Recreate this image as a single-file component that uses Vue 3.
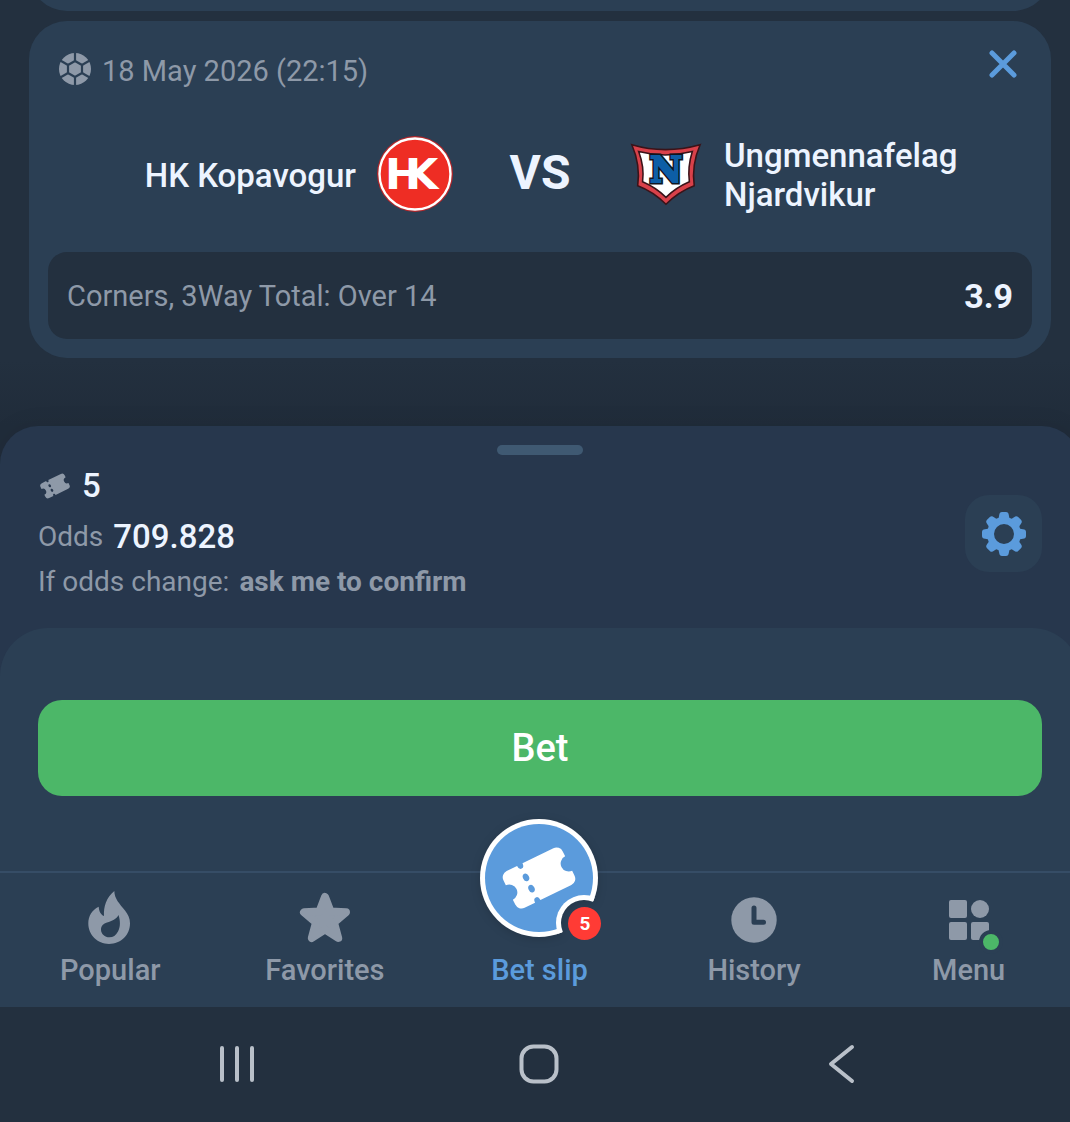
<template>
  <div class="viewport">
    <div class="screen">
      <svg class="sprite" aria-hidden="true">
        <symbol id="ticket" viewBox="0 0 76 64">
          <g transform="translate(38 32) rotate(-26)">
            <path
              fill="currentColor"
              fill-rule="evenodd"
              d="M-26-20.5H-14.4a3 4.5 0 0 0 6 0H26a7 7 0 0 1 7 7V-8a8 8 0 0 0 0 16v5.5a7 7 0 0 1-7 7H-8.4a3 4.5 0 0 0-6 0H-26a7 7 0 0 1-7-7V8a8 8 0 0 0 0-16v-5.5a7 7 0 0 1 7-7zM-14.4-6.3a3 4 0 1 0 6 0a3 4 0 1 0-6 0zM-14.4 6.3a3 4 0 1 0 6 0a3 4 0 1 0-6 0z"
            />
          </g>
        </symbol>
      </svg>

      <main class="events">
        <div class="event-card previous"></div>

        <article class="event-card">
          <header class="event-header">
            <svg class="ball" viewBox="-16 -16 32 32" aria-hidden="true">
              <circle r="16" fill="currentColor" />
              <g class="seams">
                <path d="M0-8L7-4V4L0 8L-7 4V-4Z" />
                <path
                  v-for="angle in seamAngles"
                  :key="angle"
                  :transform="`rotate(${angle})`"
                  d="M0-8V-17"
                />
              </g>
            </svg>
            <time class="event-date" datetime="2026-05-18T22:15">{{ event.date }}</time>
            <button class="remove-btn" type="button" aria-label="Remove" @click="removeEvent">
              <svg viewBox="0 0 28 28" aria-hidden="true">
                <path d="M3 3L25 25M25 3L3 25" />
              </svg>
            </button>
          </header>

          <div class="teams">
            <div class="team home">
              <span>{{ event.home }}</span>
              <svg class="crest" viewBox="0 0 78 78" aria-hidden="true">
                <circle cx="39" cy="39" r="38" fill="#b3262a" />
                <circle cx="39" cy="39" r="35.5" fill="#ee2d24" stroke="#fff" stroke-width="2.4" />
                <text class="hk" x="9 29" y="54">HK</text>
              </svg>
            </div>
            <strong class="versus">VS</strong>
            <div class="team away">
              <svg class="crest" viewBox="0 0 80 78" aria-hidden="true">
                <path
                  d="M6 9Q40 19 76 9Q67 30 70 51Q54 57 41 70Q28 57 12 51Q15 30 6 9Z"
                  fill="#d9414a"
                  stroke="#3a1319"
                  stroke-width="1.6"
                />
                <path
                  d="M13 16Q40 23 68 16Q63 32 65 47Q51 53 41 63Q31 53 17 47Q19 32 13 16Z"
                  fill="#fff"
                  stroke="#3a1319"
                  stroke-width="1.6"
                />
                <g class="njardvik">
                  <text class="outline" x="41" y="47" aria-hidden="true">N</text>
                  <text x="41" y="47">N</text>
                </g>
              </svg>
              <span>{{ event.away }}</span>
            </div>
          </div>

          <div class="selection">
            <span class="market">{{ event.market }}</span>
            <strong class="price">{{ event.price }}</strong>
          </div>
        </article>
      </main>

      <section class="sheet">
        <div class="handle"></div>
        <div class="summary">
          <div class="totals">
            <p class="count">
              <svg class="count-icon" aria-hidden="true"><use href="#ticket" /></svg>
              <strong>{{ count }}</strong>
            </p>
            <p class="odds">Odds <strong>{{ totalOdds }}</strong></p>
            <p class="policy">If odds change: <b>ask me to confirm</b></p>
          </div>
          <button class="settings-btn" type="button" aria-label="Settings">
            <svg viewBox="-22 -22 44 44" aria-hidden="true">
              <circle r="13.500" fill="none" stroke="currentColor" stroke-width="7" />
              <path
                v-for="angle in gearAngles"
                :key="angle"
                :transform="`rotate(${angle})`"
                fill="currentColor"
                d="M-6.500-14Q-5-16-4.800-19Q-4.500-22-2-22H2Q4.500-22 4.800-19Q5-16 6.500-14Z"
              />
            </svg>
          </button>
        </div>

        <div class="panel">
          <button class="bet-btn" type="button">Bet</button>
        </div>
      </section>

      <nav class="tabs">
        <a class="tab" href="#popular">
          <svg viewBox="0 0 60 60" aria-hidden="true">
            <path
              fill="currentColor"
              fill-rule="evenodd"
              d="M34.300 2C26 9 23.500 18 24 27C20.500 25.500 19 22 18.700 17.700C12 21 8.300 27 8.300 34.300C8.300 46 17.500 55 29 55C41 55 50 46 50 34.300C50 29 48 25.500 45 21.500C39.500 14.500 34.500 10 34.300 2ZM38.500 26C40.500 32 40.500 38 38 42.500C36 46.500 33 48.300 29.500 48.300C24.700 48.300 21 45 21 40.500C21 37 23.500 34.500 27 33.500C32 32 36.500 30 38.500 26Z"
            />
          </svg>
          <span>Popular</span>
        </a>
        <a class="tab" href="#favorites">
          <svg viewBox="0 0 60 60" aria-hidden="true">
            <path
              fill="currentColor"
              stroke="currentColor"
              stroke-width="8"
              stroke-linejoin="round"
              d="M30 8L35.500 22.500L51 23.300L39 33.500L43.200 49L30 40.500L16.800 49L21 33.500L9 23.300L24.500 22.500Z"
            />
          </svg>
          <span>Favorites</span>
        </a>
        <a class="tab active" href="#betslip">
          <span class="slip">
            <svg class="slip-disc" viewBox="0 0 118 118" aria-hidden="true">
              <mask id="notch">
                <rect width="118" height="118" fill="#fff" />
                <circle cx="104" cy="104" r="23" fill="#000" />
              </mask>
              <clipPath id="disc">
                <circle cx="59" cy="59" r="59" />
              </clipPath>
              <g mask="url(#notch)">
                <circle cx="59" cy="59" r="59" fill="#fff" />
                <circle cx="59" cy="59" r="54" fill="#5b9bdc" />
                <circle cx="104" cy="104" r="28" fill="#fff" clip-path="url(#disc)" />
              </g>
              <use class="slip-ticket" href="#ticket" x="21" y="27" width="76" height="64" />
            </svg>
            <span class="badge">{{ count }}</span>
          </span>
          <span>Bet slip</span>
        </a>
        <a class="tab" href="#history">
          <svg viewBox="0 0 60 60" aria-hidden="true">
            <circle cx="30" cy="31" r="22.700" fill="currentColor" />
            <path class="hands" d="M30 19V33.300H39.500" />
          </svg>
          <span>History</span>
        </a>
        <a class="tab" href="#menu">
          <svg viewBox="0 0 60 60" aria-hidden="true">
            <g fill="currentColor">
              <rect x="10" y="11" width="18" height="18" rx="2" />
              <circle cx="41" cy="20" r="9" />
              <rect x="10" y="33" width="18" height="18" rx="2" />
              <rect x="32" y="33" width="18" height="18" rx="2" />
            </g>
            <circle cx="52" cy="53" r="10" fill="#4cb768" stroke="#2b3f54" stroke-width="4" />
          </svg>
          <span>Menu</span>
        </a>
      </nav>

      <footer class="system-bar">
        <button type="button" aria-label="Recent apps">
          <svg viewBox="0 0 40 40" aria-hidden="true"><path d="M5 4V36M20 4V36M35 4V36" /></svg>
        </button>
        <button type="button" aria-label="Home">
          <svg viewBox="0 0 40 40" aria-hidden="true">
            <rect x="2.500" y="2.500" width="35" height="35" rx="12" />
          </svg>
        </button>
        <button type="button" aria-label="Back">
          <svg viewBox="0 0 40 40" aria-hidden="true"><path d="M31 3L10 20L31 37" /></svg>
        </button>
      </footer>
    </div>
  </div>
</template>

<script setup>
import { ref } from 'vue'

const event = {
  date: '18 May 2026 (22:15)',
  home: 'HK Kopavogur',
  away: 'Ungmennafelag Njardvikur',
  market: 'Corners, 3Way Total: Over 14',
  price: '3.9'
}

const count = ref(5)
const totalOdds = ref('709.828')

const seamAngles = [0, 60, 120, 180, 240, 300]
const gearAngles = [0, 45, 90, 135, 180, 225, 270, 315]

const removeEvent = () => {
  if (count.value > 0) count.value--
}
</script>

<style>
body {
  margin: 0;
  background: #23303f;
}
</style>

<style scoped>
.viewport {
  min-height: 100vh;
  overflow: hidden;
  background: #23303f;
  color: #edf4ff;
  font-family: Roboto, sans-serif;
}

/* the sheet runs slightly past the right edge of the window */
.screen {
  margin-right: -10px;
}

.sprite {
  position: absolute;
  width: 0;
  height: 0;
}

button {
  margin: 0;
  padding: 0;
  border: none;
  background: none;
  color: inherit;
  font-family: inherit;
  cursor: pointer;
}

p {
  margin: 0;
}

svg {
  display: block;
  flex: none;
}

.events {
  display: flex;
  flex-direction: column;
  gap: 10px;
  padding: 0 29px 106px;
  background: linear-gradient(to bottom, #23303f 360px, #202c3a 426px);
}

.event-card {
  padding: 19px;
  border-radius: 38px;
  background: #2b3f54;
}

.previous {
  height: 60px;
  margin-top: -87px;
}

.event-header {
  display: flex;
  align-items: center;
  height: 58px;
  padding: 0 10px 0 11px;
}

.ball {
  width: 32px;
  height: 32px;
  margin-right: 11px;
  color: #8e99a8;
}

.seams {
  fill: none;
  stroke: #2b3f54;
  stroke-width: 2.2;
}

.event-date {
  flex: 1;
  padding-top: 4px;
  color: #8e99a8;
  font-size: 29px;
  line-height: 34px;
}

.remove-btn {
  padding-bottom: 10px;
}

.remove-btn svg {
  width: 38px;
  height: 38px;
  padding: 5px;
  box-sizing: border-box;
  fill: none;
  stroke: #5b9bdc;
  stroke-width: 5;
  stroke-linecap: round;
}

.teams {
  display: flex;
  align-items: center;
  height: 154px;
}

.team {
  flex: 1;
  display: flex;
  align-items: center;
  gap: 20px;
  font-size: 33px;
  font-weight: 500;
  line-height: 39px;
}

.home {
  justify-content: flex-end;
}

.crest {
  width: 78px;
  height: 78px;
  margin-bottom: 2px;
}

.hk {
  fill: #fff;
  font-family: "DejaVu Sans", sans-serif;
  font-size: 43px;
  font-weight: 700;
}

.njardvik {
  fill: #0d5ea6;
  stroke: #0d5ea6;
  stroke-width: 2;
  font-family: "DejaVu Serif", serif;
  font-size: 36px;
  font-weight: 700;
  text-anchor: middle;
}

.outline {
  stroke: #10151f;
  stroke-width: 5;
}

.versus {
  width: 172px;
  padding-bottom: 6px;
  text-align: center;
  font-size: 48px;
  font-weight: 700;
}

.selection {
  display: flex;
  align-items: center;
  justify-content: space-between;
  height: 87px;
  padding: 0 19px;
  border-radius: 19px;
  background: #23303f;
}

.market {
  color: #8e99a8;
  font-size: 29px;
}

.price {
  font-size: 34px;
  font-weight: 700;
}

.sheet {
  position: relative;
  margin-top: -38px;
  border-radius: 38px 38px 0 0;
  background: #27374d;
  box-shadow: 0 0 24px rgba(0, 0, 0, 0.08);
}

.handle {
  position: absolute;
  top: 19px;
  left: 50%;
  width: 86px;
  height: 10px;
  border-radius: 5px;
  background: #3f5972;
  transform: translateX(-50%);
}

.summary {
  display: flex;
  align-items: center;
  justify-content: space-between;
  padding: 37px 38px 24px;
}

.totals {
  color: #8e99a8;
  font-size: 28px;
}

.totals strong {
  color: #edf4ff;
  font-size: 33px;
  font-weight: 500;
}

.count,
.odds,
.policy {
  display: flex;
  align-items: center;
  gap: 10px;
  line-height: 46px;
}

.odds {
  margin-top: 5px;
}

.policy {
  line-height: 44px;
}

.count-icon {
  width: 34px;
  height: 26px;
}

.settings-btn {
  display: flex;
  align-items: center;
  justify-content: center;
  width: 77px;
  height: 77px;
  border-radius: 24px;
  background: #2b3f54;
  color: #5b9bdc;
}

.settings-btn svg {
  width: 44px;
  height: 44px;
}

.panel {
  padding: 72px 38px 75px;
  border-radius: 48px 48px 0 0;
  background: #2b3f54;
}

.bet-btn {
  display: block;
  width: 100%;
  height: 96px;
  border-radius: 24px;
  background: #4cb768;
  color: #fff;
  font-size: 38px;
  font-weight: 500;
}

.tabs {
  position: relative;
  display: flex;
  height: 134px;
  padding: 0 4px 0 3px;
  border-top: 2px solid #364d66;
  background: #2b3f54;
}

.tab {
  flex: 1;
  display: flex;
  flex-direction: column;
  align-items: center;
  justify-content: flex-end;
  gap: 4px;
  padding-bottom: 20px;
  color: #8e99a8;
  font-size: 29px;
  font-weight: 500;
  line-height: 34px;
  text-decoration: none;
}

.tab > svg {
  width: 60px;
  height: 60px;
  overflow: visible;
}

.hands {
  fill: none;
  stroke: #2b3f54;
  stroke-width: 5;
  stroke-linecap: round;
  stroke-linejoin: round;
}

.active {
  gap: 16px;
  color: #5b9bdc;
}

.slip {
  position: relative;
}

.slip-disc {
  width: 118px;
  height: 118px;
  filter: drop-shadow(0 2px 5px rgba(0, 0, 0, 0.15));
}

.slip-ticket {
  color: #fff;
}

.badge {
  position: absolute;
  right: -3px;
  bottom: -3px;
  width: 33px;
  height: 33px;
  border-radius: 50%;
  background: #ff3b35;
  color: #fff;
  font-size: 19px;
  font-weight: 700;
  line-height: 34px;
  text-align: center;
}

.system-bar {
  display: flex;
  justify-content: center;
  gap: 262px;
  padding: 37px 0 38px;
  margin-right: 3px;
  background: #23303f;
}

.system-bar svg {
  width: 40px;
  height: 40px;
  fill: none;
  stroke: #b9c0c9;
  stroke-width: 4;
  stroke-linecap: round;
  stroke-linejoin: round;
}
</style>
